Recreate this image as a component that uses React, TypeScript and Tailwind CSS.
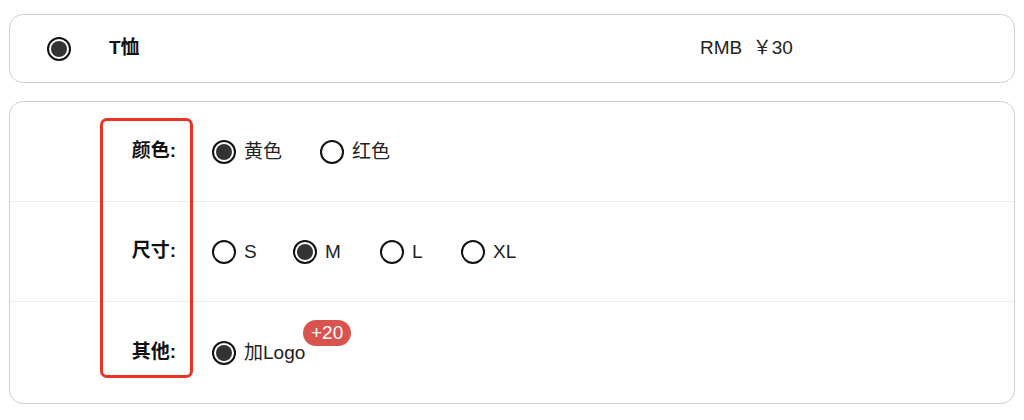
const font = { fontFamily: '"Liberation Sans", "Noto Sans CJK SC", sans-serif' };

function Radio({ checked }: { checked?: boolean }) {
  return (
    <span className="flex h-6 w-6 shrink-0 items-center justify-center rounded-full border-2 border-[#111]">
      {checked && <span className="h-4 w-4 rounded-full bg-[#333]" />}
    </span>
  );
}

function Option({ label, checked, width }: { label: string; checked?: boolean; width: string }) {
  return (
    <label className={`flex items-center gap-[8px] ${width}`}>
      <Radio checked={checked} />
      <span className="mt-[2px] text-[19px] text-[#222]">{label}</span>
    </label>
  );
}

export default function App() {
  return (
    <div className="h-[420px] w-[1024px] bg-white px-[9px] pt-[14px]" style={font}>
      {/* product row */}
      <div className="flex h-[69px] items-center rounded-[14px] border border-[#cfcfcf] bg-white">
        <span className="ml-[37px]">
          <Radio checked />
        </span>
        <span className="ml-[38px] w-[591px] text-[19px] font-bold text-[#111]">T恤</span>
        <span className="text-[19px] text-[#222]">RMB&nbsp;&nbsp;￥30</span>
      </div>

      {/* options */}
      <div className="relative mt-[18px] rounded-[14px] border border-[#cfcfcf] bg-white">
        <div className="flex h-[100px] items-center border-b border-[#ececec]">
          <span className="w-[166px] text-right text-[19px] font-bold text-[#111]">颜色:</span>
          <div className="ml-[36px] flex items-center">
            <Option label="黄色" checked width="w-[108px]" />
            <Option label="红色" width="w-[80px]" />
          </div>
        </div>
        <div className="flex h-[100px] items-center border-b border-[#ececec]">
          <span className="w-[166px] text-right text-[19px] font-bold text-[#111]">尺寸:</span>
          <div className="ml-[36px] flex items-center">
            <Option label="S" width="w-[81px]" />
            <Option label="M" checked width="w-[87px]" />
            <Option label="L" width="w-[81px]" />
            <Option label="XL" width="w-[60px]" />
          </div>
        </div>
        <div className="flex h-[101px] items-center">
          <span className="w-[166px] text-right text-[19px] font-bold text-[#111]">其他:</span>
          <div className="ml-[36px] flex items-center">
            <label className="relative flex items-center gap-[8px]">
              <Radio checked />
              <span className="mt-[2px] text-[19px] text-[#222]">加Logo</span>
              <span className="absolute -top-[17px] left-[91px] rounded-full bg-[#d9534f] px-[8px] py-[2px] text-[19px] leading-[22px] text-white">
                +20
              </span>
            </label>
          </div>
        </div>

        {/* highlight frame */}
        <div className="pointer-events-none absolute left-[90px] top-[16px] h-[260px] w-[93px] rounded-[7px] border-[3px] border-[#ea3323]" />
      </div>
    </div>
  );
}
